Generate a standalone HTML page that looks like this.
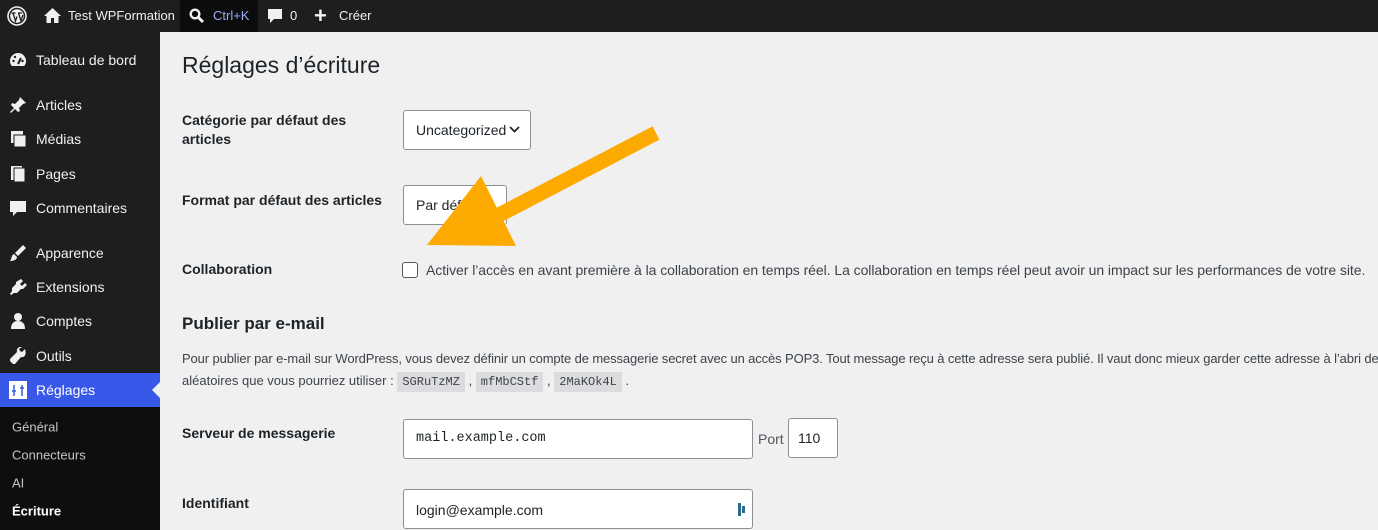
<!DOCTYPE html>
<html><head><meta charset="utf-8"><style>
*{margin:0;padding:0;box-sizing:border-box}
body{width:1378px;height:530px;overflow:hidden;background:#f0f0f1;font-family:"Liberation Sans",sans-serif;font-size:14px;color:#1d2327;position:relative}
.a{position:absolute;white-space:nowrap}
#bar{position:absolute;left:0;top:0;width:1378px;height:32px;background:#1e1e1e;color:#f0f0f1;font-size:13px}
#side{position:absolute;left:0;top:32px;width:160px;height:498px;background:#1e1e1e}
.mi{position:absolute;left:36px;color:#f0f0f1;font-size:14px;transform:translateY(-50%)}
.ic{position:absolute;left:9px;width:18px;height:18px;transform:translateY(-50%)}
.sub{position:absolute;left:12px;color:#c3c4c7;font-size:13px;transform:translateY(-50%)}
.lbl{position:absolute;left:182px;font-weight:bold;font-size:14px;line-height:19px}
.box{position:absolute;background:#fff;border:1px solid #8c8f94;border-radius:3px}
code{font-family:"Liberation Mono",monospace;font-size:12px;background:#dcdcde;padding:3px 5px;color:#3c434a}
</style></head><body>
<div id="bar">
 <svg class="a" style="left:7px;top:6px" width="20" height="20" viewBox="0 0 20 20"><circle cx="10" cy="10" r="9" fill="none" stroke="#f0f0f1" stroke-width="1.6"/><circle cx="10" cy="10" r="6.8" fill="#f0f0f1"/><path d="M4.5 7h4M11 7h4M6 7l2.5 8 1.5-4.5M11.5 7l2.5 8 2-6" stroke="#1e1e1e" stroke-width="1.3" fill="none"/></svg>
 <svg class="a" style="left:44px;top:7px" width="17" height="17" viewBox="0 0 17 17"><path d="M8.5 1L0 9h2.5v7h4.5v-5h3v5h4.5V9H17z" fill="#f0f0f1"/></svg>
 <span class="a" style="left:68px;top:8px">Test WPFormation</span>
 <div class="a" style="left:180px;top:0;width:78px;height:32px;background:#0c0c0c"></div>
 <svg class="a" style="left:189px;top:8px" width="16" height="16" viewBox="0 0 16 16"><circle cx="6" cy="6" r="4.3" fill="none" stroke="#f0f0f1" stroke-width="2.4"/><path d="M9 9l5 5" stroke="#f0f0f1" stroke-width="3"/></svg>
 <span class="a" style="left:213px;top:8px;color:#9ea9f8">Ctrl+K</span>
 <svg class="a" style="left:267px;top:8px" width="16" height="17" viewBox="0 0 16 17"><path d="M1 1h14v10H7l-4 4v-4H1z" fill="#f0f0f1"/></svg>
 <span class="a" style="left:290px;top:8px">0</span>
 <span class="a" style="left:314px;top:3px;font-size:22px;font-weight:bold">+</span>
 <span class="a" style="left:339px;top:8px">Créer</span>
</div>
<div id="side">
 <div class="ic" style="top:28px"><svg width="18" height="18"><path d="M9 2a8 8 0 0 0-8 8c0 2 .7 3.6 1.8 5h12.4A8 8 0 0 0 9 2z" fill="#f0f0f1"/><path d="M9 13l3-6" stroke="#1e1e1e" stroke-width="2"/><circle cx="4.5" cy="10" r="1.2" fill="#1e1e1e"/><circle cx="6" cy="6" r="1.2" fill="#1e1e1e"/><circle cx="13.5" cy="10" r="1.2" fill="#1e1e1e"/></svg></div><span class="mi" style="top:28px">Tableau de bord</span>
 <div class="ic" style="top:73px"><svg width="18" height="18"><path d="M11 1l6 6-3 1-4 4 1 3-2 1-3-3-4 4-1-1 4-4-3-3 1-2 3 1 4-4z" fill="#f0f0f1"/></svg></div><span class="mi" style="top:73px">Articles</span>
 <div class="ic" style="top:107px"><svg width="18" height="18"><rect x="2" y="1" width="12" height="12" fill="#f0f0f1"/><rect x="5" y="5" width="12" height="12" fill="#f0f0f1" stroke="#1e1e1e"/></svg></div><span class="mi" style="top:107px">Médias</span>
 <div class="ic" style="top:142px"><svg width="18" height="18"><rect x="2" y="1" width="11" height="14" fill="#f0f0f1"/><rect x="5" y="3" width="11" height="14" fill="#f0f0f1" stroke="#1e1e1e"/></svg></div><span class="mi" style="top:142px">Pages</span>
 <div class="ic" style="top:176px"><svg width="18" height="18"><path d="M1 2h16v11H8l-4 4v-4H1z" fill="#f0f0f1"/></svg></div><span class="mi" style="top:176px">Commentaires</span>
 <div class="ic" style="top:221px"><svg width="18" height="18"><path d="M14 1l3 3-8 8-3-3zM5 10l3 3c0 3-4 4-7 4 2-2 1-6 4-7z" fill="#f0f0f1"/></svg></div><span class="mi" style="top:221px">Apparence</span>
 <div class="ic" style="top:255px"><svg width="18" height="18"><path d="M12 1l2 2-3 3 2 2 3-3 2 2-4 4-2 0-4 4-3 0-3 2-1-1 2-3 0-3 4-4 0-2z" fill="#f0f0f1"/></svg></div><span class="mi" style="top:255px">Extensions</span>
 <div class="ic" style="top:289px"><svg width="18" height="18"><circle cx="9" cy="5" r="4" fill="#f0f0f1"/><path d="M2 17c0-6 3-8 7-8s7 2 7 8z" fill="#f0f0f1"/></svg></div><span class="mi" style="top:289px">Comptes</span>
 <div class="ic" style="top:324px"><svg width="18" height="18"><path d="M16 2l-3 3-2-1-1-2 3-2c-3-1-6 2-5 5L1 12l0 2 3 3 2 0 6-7c3 1 6-2 4-8z" fill="#f0f0f1"/></svg></div><span class="mi" style="top:324px">Outils</span>
 <div class="a" style="left:0;top:341px;width:160px;height:34px;background:#3858e9"></div>
 <div class="a" style="left:152px;top:350px;width:0;height:0;border-top:8px solid transparent;border-bottom:8px solid transparent;border-right:8px solid #f0f0f1"></div>
 <div class="ic" style="top:358px;background:#fff"><svg width="18" height="18"><path d="M5 4v11M13 4v11M3 10h4M11 7h4" stroke="#3858e9" stroke-width="1.5"/></svg></div><span class="mi" style="top:358px;color:#fff">Réglages</span>
 <div class="a" style="left:0;top:375px;width:160px;height:123px;background:#0e0e0e"></div>
 <span class="sub" style="top:395px">Général</span>
 <span class="sub" style="top:423px">Connecteurs</span>
 <span class="sub" style="top:451px">AI</span>
 <span class="sub" style="top:479px;color:#fff;font-weight:bold">Écriture</span>
</div>
<div class="a" style="left:182px;top:52px;font-size:23px;color:#1d2327">Réglages d’écriture</div>
<div class="lbl" style="top:111px">Catégorie par défaut des<br>articles</div>
<div class="box" style="left:403px;top:110px;width:128px;height:40px"><span class="a" style="left:12px;top:11px">Uncategorized</span><svg class="a" style="left:105px;top:15px" width="11" height="8"><path d="M1 1l4.5 4.5L10 1" stroke="#1d2327" stroke-width="1.7" fill="none"/></svg></div>
<div class="lbl" style="top:191px">Format par défaut des articles</div>
<div class="box" style="left:403px;top:185px;width:104px;height:40px"><span class="a" style="left:12px;top:11px">Par défaut</span></div>
<div class="lbl" style="top:260px">Collaboration</div>
<div class="box" style="left:402px;top:262px;width:16px;height:16px;border-color:#50575e;border-radius:3px"></div>
<span class="a" style="left:426px;top:262px;color:#3c434a;letter-spacing:-0.06px">Activer l’accès en avant première à la collaboration en temps réel. La collaboration en temps réel peut avoir un impact sur les performances de votre site.</span>
<div class="a" style="left:182px;top:314px;font-size:17px;font-weight:bold">Publier par e-mail</div>
<div class="a" style="left:182px;top:351px;font-size:13px;color:#3c434a;letter-spacing:-0.12px">Pour publier par e-mail sur WordPress, vous devez définir un compte de messagerie secret avec un accès POP3. Tout message reçu à cette adresse sera publié. Il vaut donc mieux garder cette adresse à l’abri des</div>
<div class="a" style="left:182px;top:373px;font-size:13px;color:#3c434a">aléatoires que vous pourriez utiliser : <code>SGRuTzMZ</code> , <code>mfMbCStf</code> , <code>2MaKOk4L</code> .</div>
<div class="lbl" style="top:424px">Serveur de messagerie</div>
<div class="box" style="left:403px;top:419px;width:350px;height:40px"><span class="a" style="left:12px;top:11px;font-family:'Liberation Mono',monospace;font-size:13.5px">mail.example.com</span></div>
<span class="a" style="left:758px;top:431px;color:#50575e">Port</span>
<div class="box" style="left:788px;top:418px;width:50px;height:40px"><span class="a" style="left:9px;top:11px">110</span></div>
<div class="lbl" style="top:494px">Identifiant</div>
<div class="box" style="left:403px;top:489px;width:350px;height:40px"><span class="a" style="left:12px;top:12px">login@example.com</span><div class="a" style="left:334px;top:13px;width:3px;height:13px;background:#2b6a8a"></div><div class="a" style="left:338px;top:16px;width:3px;height:7px;background:#2b6a8a"></div></div>
<svg class="a" style="left:0;top:0" width="1378" height="530"><path d="M656 133L474 228" stroke="#fcaa00" stroke-width="15"/><path d="M481 176L516 246L427 245Z" fill="#fcaa00"/></svg>
</body></html>
